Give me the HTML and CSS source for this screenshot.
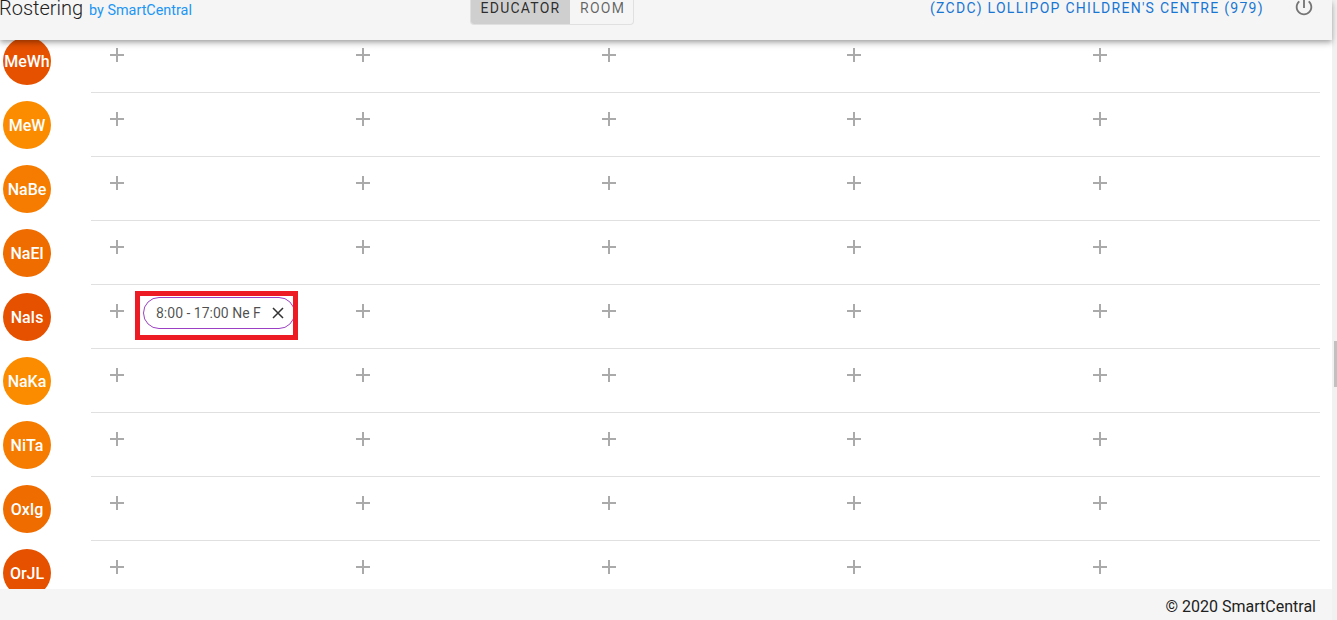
FILE: index.html
```html
<!DOCTYPE html>
<html lang="en">
<head>
  <meta charset="UTF-8">
  <title>Rostering by SmartCentral</title>
  <link rel="stylesheet" href="styles.css">
</head>
<body>

<svg class="defs" width="0" height="0">
  <symbol id="plus" viewBox="0 0 24 24"><path d="M19 13h-6v6h-2v-6H5v-2h6V5h2v6h6v2z"/></symbol>
</svg>

<div class="page">
  <header class="topbar">
    <div class="brand">Rostering <span class="brand-by">by SmartCentral</span></div>
    <div class="toggle">
      <span class="toggle-btn active">Educator</span>
      <span class="toggle-btn">Room</span>
    </div>
    <div class="centre">(ZCDC) Lollipop Children's Centre (979)</div>
    <svg class="power" viewBox="0 0 24 24" width="22" height="22"><path d="M13 3h-2v10h2V3zm4.83 2.17l-1.42 1.42C17.99 7.86 19 9.81 19 12c0 3.87-3.13 7-7 7s-7-3.13-7-7c0-2.19 1.01-4.14 2.58-5.42L6.17 5.17C4.23 6.82 3 9.26 3 12c0 4.97 4.03 9 9 9s9-4.03 9-9c0-2.74-1.23-5.18-3.17-6.83z"/></svg>
  </header>

  <main class="content">
    <div class="rows">
      <div class="row">
        <div class="avatar dark">MeWh</div>
        <div class="cells">
          <div class="cell"><svg class="plus"><use href="#plus"/></svg></div>
          <div class="cell"><svg class="plus"><use href="#plus"/></svg></div>
          <div class="cell"><svg class="plus"><use href="#plus"/></svg></div>
          <div class="cell"><svg class="plus"><use href="#plus"/></svg></div>
          <div class="cell"><svg class="plus"><use href="#plus"/></svg></div>
        </div>
      </div>
      <div class="row">
        <div class="avatar light">MeW</div>
        <div class="cells">
          <div class="cell"><svg class="plus"><use href="#plus"/></svg></div>
          <div class="cell"><svg class="plus"><use href="#plus"/></svg></div>
          <div class="cell"><svg class="plus"><use href="#plus"/></svg></div>
          <div class="cell"><svg class="plus"><use href="#plus"/></svg></div>
          <div class="cell"><svg class="plus"><use href="#plus"/></svg></div>
        </div>
      </div>
      <div class="row">
        <div class="avatar mid">NaBe</div>
        <div class="cells">
          <div class="cell"><svg class="plus"><use href="#plus"/></svg></div>
          <div class="cell"><svg class="plus"><use href="#plus"/></svg></div>
          <div class="cell"><svg class="plus"><use href="#plus"/></svg></div>
          <div class="cell"><svg class="plus"><use href="#plus"/></svg></div>
          <div class="cell"><svg class="plus"><use href="#plus"/></svg></div>
        </div>
      </div>
      <div class="row">
        <div class="avatar deep">NaEl</div>
        <div class="cells">
          <div class="cell"><svg class="plus"><use href="#plus"/></svg></div>
          <div class="cell"><svg class="plus"><use href="#plus"/></svg></div>
          <div class="cell"><svg class="plus"><use href="#plus"/></svg></div>
          <div class="cell"><svg class="plus"><use href="#plus"/></svg></div>
          <div class="cell"><svg class="plus"><use href="#plus"/></svg></div>
        </div>
      </div>
      <div class="row">
        <div class="avatar dark">NaIs</div>
        <div class="cells">
          <div class="cell">
            <svg class="plus"><use href="#plus"/></svg>
            <div class="marked">
              <div class="chip">8:00 - 17:00 Ne F
                <svg class="chip-x" viewBox="0 0 12 12" width="12" height="12"><path d="M1 1l10 10M11 1L1 11"/></svg>
              </div>
            </div>
          </div>
          <div class="cell"><svg class="plus"><use href="#plus"/></svg></div>
          <div class="cell"><svg class="plus"><use href="#plus"/></svg></div>
          <div class="cell"><svg class="plus"><use href="#plus"/></svg></div>
          <div class="cell"><svg class="plus"><use href="#plus"/></svg></div>
        </div>
      </div>
      <div class="row">
        <div class="avatar light">NaKa</div>
        <div class="cells">
          <div class="cell"><svg class="plus"><use href="#plus"/></svg></div>
          <div class="cell"><svg class="plus"><use href="#plus"/></svg></div>
          <div class="cell"><svg class="plus"><use href="#plus"/></svg></div>
          <div class="cell"><svg class="plus"><use href="#plus"/></svg></div>
          <div class="cell"><svg class="plus"><use href="#plus"/></svg></div>
        </div>
      </div>
      <div class="row">
        <div class="avatar mid">NiTa</div>
        <div class="cells">
          <div class="cell"><svg class="plus"><use href="#plus"/></svg></div>
          <div class="cell"><svg class="plus"><use href="#plus"/></svg></div>
          <div class="cell"><svg class="plus"><use href="#plus"/></svg></div>
          <div class="cell"><svg class="plus"><use href="#plus"/></svg></div>
          <div class="cell"><svg class="plus"><use href="#plus"/></svg></div>
        </div>
      </div>
      <div class="row">
        <div class="avatar deep">OxIg</div>
        <div class="cells">
          <div class="cell"><svg class="plus"><use href="#plus"/></svg></div>
          <div class="cell"><svg class="plus"><use href="#plus"/></svg></div>
          <div class="cell"><svg class="plus"><use href="#plus"/></svg></div>
          <div class="cell"><svg class="plus"><use href="#plus"/></svg></div>
          <div class="cell"><svg class="plus"><use href="#plus"/></svg></div>
        </div>
      </div>
      <div class="row">
        <div class="avatar dark">OrJL</div>
        <div class="cells">
          <div class="cell"><svg class="plus"><use href="#plus"/></svg></div>
          <div class="cell"><svg class="plus"><use href="#plus"/></svg></div>
          <div class="cell"><svg class="plus"><use href="#plus"/></svg></div>
          <div class="cell"><svg class="plus"><use href="#plus"/></svg></div>
          <div class="cell"><svg class="plus"><use href="#plus"/></svg></div>
        </div>
      </div>
    </div>
  </main>

  <footer class="footer">© 2020 SmartCentral</footer>
</div>

<div class="scrollbar"><div class="thumb"></div></div>

</body>
</html>
```

FILE: styles.css
```css
html, body {
  height: 100%;
}
body {
  margin: 0;
  display: flex;
  overflow: hidden;
  font-family: Roboto, sans-serif;
  background: #fff;
}
.defs {
  display: none;
}
.page {
  flex: 1;
  min-width: 0;
  height: 620px;
  display: flex;
  flex-direction: column;
}
.topbar {
  flex: none;
  height: 40px;
  position: relative;
  z-index: 2;
  display: flex;
  align-items: flex-start;
  background: #f5f5f5;
  box-shadow: 0 2px 4px -1px rgba(0,0,0,.2), 0 4px 5px 0 rgba(0,0,0,.14), 0 1px 10px 0 rgba(0,0,0,.12);
}
.brand {
  width: 470px;
  margin: -4px 0 0 -1px;
  font-size: 20px;
  line-height: 24px;
  font-weight: 300;
  color: #212121;
}
.brand-by {
  margin-left: 1px;
  font-size: 14.4px;
  font-weight: 400;
  color: #2196f3;
}
.toggle {
  display: flex;
  flex: none;
  width: 164px;
  height: 25px;
  margin-left: 1px;
  border: 1px solid #e0e0e0;
  border-top: 0;
  border-radius: 0 0 4px 4px;
  overflow: hidden;
  box-sizing: border-box;
}
.toggle-btn {
  flex: none;
  padding: 0 0 0 10px;
  line-height: 16px;
  font-size: 14px;
  letter-spacing: 1.25px;
  text-transform: uppercase;
  color: rgba(0,0,0,.6);
}
.toggle-btn.active {
  width: 99px;
  padding: 0;
  text-align: center;
  background: #cfcfcf;
  color: rgba(0,0,0,.8);
}
.centre {
  margin-left: 296px;
  line-height: 16px;
  font-size: 14px;
  letter-spacing: 1.28px;
  text-transform: uppercase;
  color: #1976d2;
  white-space: nowrap;
}
.power {
  margin: -4px 0 0 29px;
  fill: #757575;
}
.content {
  flex: 1;
  min-height: 0;
  overflow: hidden;
}
.rows {
  margin-top: -11px;
  margin-right: 12px;
}
.row {
  display: flex;
  height: 64px;
}
.avatar {
  flex: none;
  width: 48px;
  height: 48px;
  margin: 8px 40px 0 3px;
  border-radius: 50%;
  display: flex;
  align-items: center;
  justify-content: center;
  overflow: hidden;
  color: #fff;
  font-size: 16px;
  font-weight: 500;
}
.dark { background: #e65100; }
.deep { background: #ef6c00; }
.mid { background: #f57c00; }
.light { background: #fb8c00; }
.cells {
  flex: 1;
  min-width: 0;
  display: flex;
  box-sizing: border-box;
  border-bottom: 1px solid #e0e0e0;
}
.cell {
  flex: 1 1 0;
  min-width: 0;
  padding: 14px 0 0 14px;
  box-sizing: border-box;
  display: flex;
  align-items: flex-start;
}
.plus {
  flex: none;
  width: 24px;
  height: 24px;
  fill: #aaa;
}
.marked {
  flex: none;
  width: 150px;
  height: 38px;
  margin: -8px 0 0 6px;
  border: 5px solid #ed1c24;
  padding: 1px 0 0 3px;
  overflow: hidden;
}
.chip {
  width: 152px;
  height: 32px;
  box-sizing: border-box;
  border: 1px solid #9c3fc4;
  border-radius: 16px;
  padding: 0 10px 0 12px;
  display: flex;
  align-items: center;
  justify-content: space-between;
  font-size: 14px;
  color: rgba(0,0,0,.7);
  white-space: nowrap;
}
.chip-x {
  flex: none;
  fill: none;
  stroke: #333;
  stroke-width: 1.5;
}
.footer {
  flex: none;
  height: 31px;
  position: relative;
  z-index: 1;
  padding-right: 16px;
  line-height: 36px;
  text-align: right;
  font-size: 16px;
  color: #212121;
  background: #f5f5f5;
}
.scrollbar {
  flex: none;
  width: 5px;
  height: 620px;
  background: #f1f1f1;
}
.thumb {
  width: 3px;
  height: 46px;
  margin: 341px 0 0 2px;
  background: #c1c1c1;
}
```
